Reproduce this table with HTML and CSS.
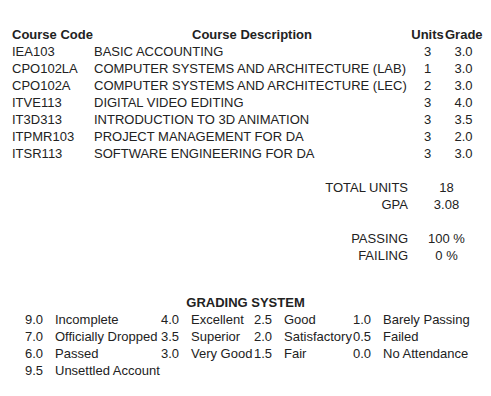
FILE: index.html
```html
<!DOCTYPE html>
<html>
<head>
<meta charset="utf-8">
<link rel="stylesheet" href="styles.css">
</head>
<body>
<div class="page">
  <div class="courses">
    <div class="h left">Course Code</div>
    <div class="h center">Course Description</div>
    <div class="h center">Units</div>
    <div class="h center">Grade</div>

    <div>IEA103</div><div>BASIC ACCOUNTING</div><div class="center">3</div><div class="center">3.0</div>
    <div>CPO102LA</div><div>COMPUTER SYSTEMS AND ARCHITECTURE (LAB)</div><div class="center">1</div><div class="center">3.0</div>
    <div>CPO102A</div><div>COMPUTER SYSTEMS AND ARCHITECTURE (LEC)</div><div class="center">2</div><div class="center">3.0</div>
    <div>ITVE113</div><div>DIGITAL VIDEO EDITING</div><div class="center">3</div><div class="center">4.0</div>
    <div>IT3D313</div><div>INTRODUCTION TO 3D ANIMATION</div><div class="center">3</div><div class="center">3.5</div>
    <div>ITPMR103</div><div>PROJECT MANAGEMENT FOR DA</div><div class="center">3</div><div class="center">2.0</div>
    <div>ITSR113</div><div>SOFTWARE ENGINEERING FOR DA</div><div class="center">3</div><div class="center">3.0</div>
  </div>

  <div class="summary">
    <div class="label">TOTAL UNITS</div><div class="value">18</div>
    <div class="label">GPA</div><div class="value">3.08</div>
    <div class="label blank">&nbsp;</div><div class="value">&nbsp;</div>
    <div class="label">PASSING</div><div class="value">100 %</div>
    <div class="label">FAILING</div><div class="value">0 %</div>
  </div>

  <div class="grading-title">GRADING SYSTEM</div>
  <div class="grading">
    <div>9.0</div><div>Incomplete</div><div>4.0</div><div>Excellent</div><div>2.5</div><div>Good</div><div>1.0</div><div>Barely Passing</div>
    <div>7.0</div><div>Officially Dropped</div><div>3.5</div><div>Superior</div><div>2.0</div><div>Satisfactory</div><div>0.5</div><div>Failed</div>
    <div>6.0</div><div>Passed</div><div>3.0</div><div>Very Good</div><div>1.5</div><div>Fair</div><div>0.0</div><div>No Attendance</div>
    <div>9.5</div><div>Unsettled Account</div><div></div><div></div><div></div><div></div><div></div><div></div>
  </div>
</div>
</body>
</html>
```

FILE: styles.css
```css
html, body {
  margin: 0;
  padding: 0;
  background: #ffffff;
}
body {
  margin: 8px;
  font-family: "Liberation Sans", Arial, sans-serif;
  font-size: 13px;
  line-height: 17px;
  color: #222222;
}
.page {
  padding-top: 18px;
}
.courses {
  display: grid;
  grid-template-columns: 82px 316px 35px 37px;
  margin-left: 4px;
  white-space: nowrap;
}
.courses .h {
  font-weight: bold;
}
.center {
  text-align: center;
}
.left {
  text-align: left;
}
.summary {
  display: grid;
  grid-template-columns: auto 73px;
  justify-content: end;
  margin-top: 17px;
  white-space: nowrap;
}
.summary .label {
  text-align: right;
  padding-right: 2px;
}
.summary .value {
  text-align: center;
}
.grading-title {
  margin-top: 30px;
  text-align: center;
  font-weight: bold;
}
.grading {
  display: grid;
  grid-template-columns: 30px 106px 30px 63px 30px 69px 30px 85px;
  justify-content: center;
  white-space: nowrap;
}
.grading > div {
  padding-left: 1px;
}
```
